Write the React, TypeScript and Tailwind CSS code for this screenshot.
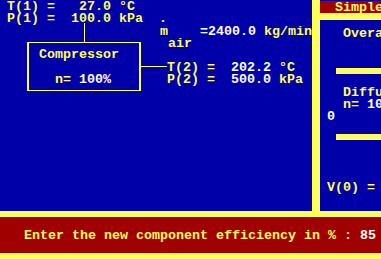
const mono = "font-['Liberation_Mono',monospace] font-bold text-[13.33px] leading-[12px] whitespace-pre";

const Txt = ({ className, children }: { className: string; children: React.ReactNode }) => (
  <div className={`${mono} absolute ${className}`}>{children}</div>
);

const Y = ({ children }: { children: React.ReactNode }) => <span className="text-[#ffff55]">{children}</span>;
const W = ({ children }: { children: React.ReactNode }) => <span className="text-white">{children}</span>;

const App = () => {
  return (
    <div className="w-[381px] h-[259px] flex flex-col bg-[#0000a8] overflow-hidden">
      <div className="flex h-[211px]">
        {/* Schema: compresseur */}
        <div className="relative w-[312px] h-full">
          <Txt className="left-[7px] top-[1px]">
            <Y>T(1) =   27.0 °C</Y>
          </Txt>
          <Txt className="left-[7px] top-[13px]">
            <Y>P(1) =  100.0 kPa</Y>
          </Txt>
          <div className="absolute left-[84px] top-[23px] w-px h-[19px] bg-[#ffff55]" />

          <div className="absolute left-[27px] top-[42px] w-[114px] h-[49px] border-x-2 border-y border-[#ffff55]" />
          <Txt className="left-[39px] top-[49px]">
            <Y>Compressor</Y>
          </Txt>
          <Txt className="left-[55px] top-[74px]">
            <Y>n= </Y>
            <W>100%</W>
          </Txt>
          <div className="absolute left-[141px] top-[66px] w-[26px] h-px bg-[#ffff55]" />

          <Txt className="left-[167px] top-[62px]">
            <Y>T(2) =  </Y>
            <W>202.2</W>
            <Y> °C</Y>
          </Txt>
          <Txt className="left-[167px] top-[74px]">
            <Y>P(2) =  </Y>
            <W>500.0</W>
            <Y> kPa</Y>
          </Txt>

          <Txt className="left-[159px] top-[13px]">
            <Y>.</Y>
          </Txt>
          <Txt className="left-[160px] top-[26px]">
            <Y>m    </Y>
            <W>=2400.0</W>
            <Y> kg/min</Y>
          </Txt>
          <Txt className="left-[168px] top-[38px]">
            <Y>air</Y>
          </Txt>
        </div>

        <div className="w-[8px] bg-[#ffff55]" />

        {/* Panneau droit */}
        <div className="flex-1 flex flex-col overflow-hidden">
          <div className="h-[12px] mt-px bg-[#a00000] pl-[15px] pt-px overflow-hidden">
            <div className={`${mono} text-[#ffff55]`}>Simple Gas Turbine</div>
          </div>
          <div className="h-[7px] bg-[#ffff55]" />
          <div className="flex-1 flex flex-col pt-[8px] overflow-hidden">
            <div className={`${mono} pl-[23px] text-[#ffff55]`}>Overall Efficiency</div>
            <div className="ml-[16px] mt-[28px] h-[6px] bg-[#ffff55]" />
            <div className={`${mono} pl-[23px] mt-[13px] text-[#ffff55]`}>Diffuser</div>
            <div className={`${mono} pl-[23px] text-[#ffff55]`}>
              n= <span className="text-white">100%</span>
            </div>
            <div className={`${mono} pl-[7px] text-white`}>0</div>
            <div className="ml-[16px] mt-[11px] h-[6px] bg-[#ffff55]" />
            <div className={`${mono} pl-[7px] mt-[42px] text-[#ffff55]`}>V(0) =</div>
          </div>
        </div>
      </div>

      <div className="h-[6px] bg-[#ffff55]" />
      <div className="h-[36px] bg-[#a00000] pl-[24px] pt-[13px]">
        <div className={mono}>
          <Y>Enter the new component efficiency in % : </Y>
          <W>85</W>
        </div>
      </div>
      <div className="h-[6px] bg-[#ffff55]" />
    </div>
  );
};

export default App;
